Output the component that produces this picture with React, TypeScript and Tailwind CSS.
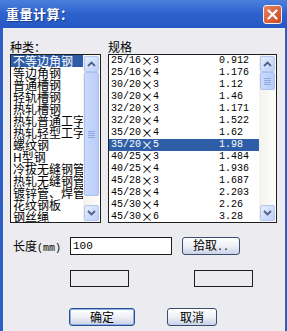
const kinds = [
  "不等边角钢",
  "等边角钢",
  "普通槽钢",
  "轻轨槽钢",
  "热轧槽钢",
  "热轧普通工字",
  "热轧轻型工字",
  "螺纹钢",
  "H型钢",
  "冷拔无缝钢管",
  "热轧无缝钢管",
  "镀锌管、焊管",
  "花纹钢板",
  "钢丝绳",
];

const specs: [string, string, string][] = [
  ["25/16", "3", "0.912"],
  ["25/16", "4", "1.176"],
  ["30/20", "3", "1.12"],
  ["30/20", "4", "1.46"],
  ["32/20", "3", "1.171"],
  ["32/20", "4", "1.522"],
  ["35/20", "4", "1.62"],
  ["35/20", "5", "1.98"],
  ["40/25", "3", "1.484"],
  ["40/25", "4", "1.936"],
  ["45/28", "3", "1.687"],
  ["45/28", "4", "2.203"],
  ["45/30", "4", "2.26"],
  ["45/30", "6", "3.28"],
];

const cjk = "font-['SimSun','Noto_Sans_CJK_SC',sans-serif]";
const mono = "font-['Liberation_Mono',monospace]";

const Arrow = ({ up }: { up?: boolean }) => (
  <svg width="9" height="6" viewBox="0 0 9 6">
    <path
      d={up ? "M1 5 L4.5 1.5 L8 5" : "M1 1 L4.5 4.5 L8 1"}
      fill="none"
      stroke="#4d6185"
      strokeWidth="1.8"
    />
  </svg>
);

const SbButton = ({ up }: { up?: boolean }) => (
  <div className="h-[16px] w-[15px] mx-auto rounded-[2px] border border-[#b4c6ee] bg-gradient-to-br from-[#e6eefe] to-[#bccff8] flex items-center justify-center">
    <Arrow up={up} />
  </div>
);

const Thumb = ({ h }: { h: number }) => (
  <div
    className="w-[15px] mx-auto rounded-[2px] border border-[#aabfee] bg-gradient-to-r from-[#cbdafd] to-[#b9cdf8] flex flex-col items-center justify-center gap-[1px]"
    style={{ height: h }}
  >
    <div className="w-[7px] h-px bg-[#8ea6dc]" />
    <div className="w-[7px] h-px bg-[#8ea6dc]" />
    <div className="w-[7px] h-px bg-[#8ea6dc]" />
    <div className="w-[7px] h-px bg-[#8ea6dc]" />
  </div>
);

const Scrollbar = ({ thumb }: { thumb: number }) => (
  <div className="w-[17px] h-full flex flex-col pt-[1px] pb-[1px] bg-gradient-to-r from-[#f3f2ee] to-[#fdfdfb]">
    <SbButton up />
    <Thumb h={thumb} />
    <div className="flex-1" />
    <SbButton />
  </div>
);

const XpButton = ({ label, w, def }: { label: React.ReactNode; w: number; def?: boolean }) => (
  <div
    className={`h-[18px] rounded-[3px] border flex items-center justify-center text-[12px] leading-none text-black bg-gradient-to-b from-[#ffffff] via-[#eef0f6] to-[#c9d2e6] ${
      def ? "border-[#2a4f8e] shadow-[inset_0_0_0_1px_#8fb0e8]" : "border-[#3b4d6e]"
    } ${cjk}`}
    style={{ width: w }}
  >
    {label}
  </div>
);

export default function App() {
  return (
    <div className="w-[287px] h-[331px] overflow-hidden bg-[#2d5fc6] flex flex-col">
      {/* title bar */}
      <div className="h-[28px] flex items-center justify-between px-[6px] bg-gradient-to-b from-[#4c7fdc] via-[#2d61cc] to-[#2558c4]">
        <span className={`text-white font-bold text-[13px] tracking-[0.5px] [text-shadow:1px_1px_0_#1a3c8a] ${cjk}`}>
          重量计算：
        </span>
        <div className="w-[19px] h-[19px] mr-[-1px] rounded-[3px] border border-[#f4f1ee] bg-gradient-to-br from-[#e9825e] to-[#c9461f] flex items-center justify-center">
          <svg width="11" height="11" viewBox="0 0 11 11">
            <path d="M1.5 1.5 L9.5 9.5 M9.5 1.5 L1.5 9.5" stroke="#fff" strokeWidth="2.2" strokeLinecap="round" />
          </svg>
        </div>
      </div>

      {/* body */}
      <div className="flex-1 ml-[3px] mr-[2px] bg-[#ecebef] pt-[11px] text-black">
        <div className="flex pl-[7px]">
          <div className="w-[91px] flex flex-col">
            <div className={`h-[15px] text-[12px] leading-[15px] ${cjk}`}>种类：</div>
            <div className="h-[169px] border border-[#1e1e1e] bg-white flex">
              <div className="flex-1 overflow-hidden flex flex-col">
                {kinds.map((k, i) => (
                  <div
                    key={k}
                    className={`h-[12px] shrink-0 pl-[2px] text-[12px] leading-[12px] whitespace-nowrap ${cjk} ${
                      i === 0 ? "bg-[#2f5ea8] text-white" : ""
                    }`}
                  >
                    {k}
                  </div>
                ))}
              </div>
              <Scrollbar thumb={124} />
            </div>
          </div>

          <div className="w-[169px] ml-[7px] flex flex-col">
            <div className={`h-[15px] text-[12px] leading-[15px] ${cjk}`}>规格</div>
            <div className="h-[169px] border border-[#1e1e1e] bg-white flex">
              <div className="flex-1 overflow-hidden flex flex-col">
                {specs.map(([a, b, v], i) => (
                  <div
                    key={a + b}
                    className={`h-[12px] shrink-0 pl-[2px] grid grid-cols-[108px_1fr] items-center text-[10px] leading-[12px] whitespace-nowrap ${mono} ${
                      i === 7 ? "bg-[#2f5ea8] text-white" : ""
                    }`}
                  >
                    <span className="flex items-center">
                      {a}
                      <span className={`text-[12px] w-[12px] text-center leading-[12px] ${cjk}`}>×</span>
                      {b}
                    </span>
                    <span>{v}</span>
                  </div>
                ))}
              </div>
              <Scrollbar thumb={18} />
            </div>
          </div>
        </div>

        {/* length row */}
        <div className="flex items-center mt-[14px] h-[18px]">
          <div className={`w-[67px] pl-[10px] text-[12px] ${cjk}`}>
            长度<span className={`text-[10px] ${mono}`}>(mm)</span>
          </div>
          <div className={`w-[102px] h-[18px] border border-[#1e1e1e] bg-white text-[11px] leading-[16px] pl-[2px] ${mono}`}>
            100
          </div>
          <div className="ml-[10px]">
            <XpButton
              w={58}
              label={
                <span>
                  拾取<span className={`text-[10px] ${mono}`}>..</span>
                </span>
              }
            />
          </div>
        </div>

        {/* result boxes */}
        <div className="flex mt-[15px]">
          <div className="ml-[67px] w-[59px] h-[17px] border border-[#1e1e1e]" />
          <div className="ml-[65px] w-[59px] h-[17px] border border-[#1e1e1e]" />
        </div>

        {/* buttons */}
        <div className="flex mt-[21px]">
          <div className="ml-[66px]">
            <XpButton w={66} label="确定" def />
          </div>
          <div className="ml-[32px]">
            <XpButton w={50} label="取消" />
          </div>
        </div>
      </div>
    </div>
  );
}
